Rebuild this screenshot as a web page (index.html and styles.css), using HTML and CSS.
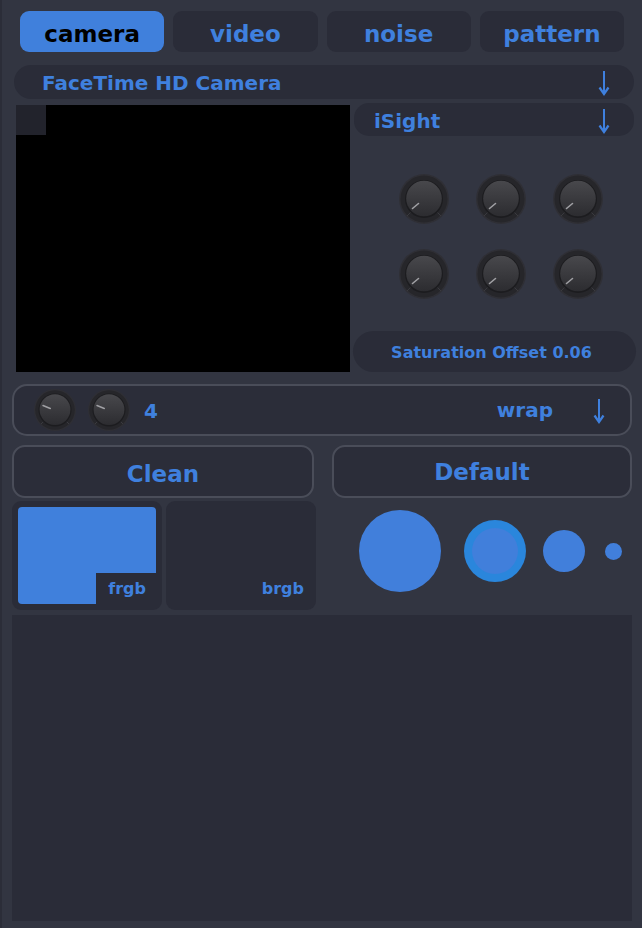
FILE: index.html
```html
<!DOCTYPE html>
<html>
<head>
<meta charset="utf-8">
<link rel="stylesheet" href="styles.css">
</head>
<body>
<svg class="defs" width="0" height="0">
  <defs>
    <linearGradient id="kg" x1="0" y1="0" x2="0" y2="1">
      <stop offset="0" stop-color="#48484c"/>
      <stop offset="1" stop-color="#2c2c30"/>
    </linearGradient>
    <symbol id="knob" viewBox="0 0 50 50">
      <circle cx="25" cy="25" r="25" fill="#2f2f35"/>
      <circle cx="25" cy="25" r="23.5" fill="#26262a"/>
      <line x1="12.3" y1="37.7" x2="8" y2="42" stroke="#3a3a3f" stroke-width="1"/>
      <line x1="37.7" y1="37.7" x2="42" y2="42" stroke="#3a3a3f" stroke-width="1"/>
      <circle cx="25" cy="25" r="19" fill="#1c1c1f"/>
      <circle cx="25" cy="24.5" r="17.8" fill="url(#kg)"/>
      <line x1="19.5" y1="29.5" x2="13.5" y2="34.5" stroke="#a0a0a4" stroke-width="1.6" stroke-linecap="round"/>
    </symbol>
    <symbol id="sknob" viewBox="0 0 42 42">
      <circle cx="21" cy="21" r="21" fill="#2f2f35"/>
      <circle cx="21" cy="21" r="19.8" fill="#26262a"/>
      <line x1="10.5" y1="31.5" x2="7" y2="35" stroke="#3a3a3f" stroke-width="1"/>
      <line x1="31.5" y1="31.5" x2="35" y2="35" stroke="#3a3a3f" stroke-width="1"/>
      <circle cx="21" cy="21" r="16.5" fill="#1c1c1f"/>
      <circle cx="21" cy="20.6" r="15.4" fill="url(#kg)"/>
      <line x1="16.3" y1="19.5" x2="9" y2="16.5" stroke="#a0a0a4" stroke-width="1.5" stroke-linecap="round"/>
    </symbol>
    <symbol id="arrow" viewBox="0 0 12 26">
      <line x1="6" y1="1" x2="6" y2="23" stroke="#3f80de" stroke-width="2"/>
      <path d="M1.5 17.5 L6 24 L10.5 17.5" fill="none" stroke="#3f80de" stroke-width="2.2"/>
    </symbol>
  </defs>
</svg>

<div class="app">
  <div class="tabs">
    <div class="tab active">camera</div>
    <div class="tab">video</div>
    <div class="tab">noise</div>
    <div class="tab">pattern</div>
  </div>

  <div class="dropdown main-drop">
    <span>FaceTime HD Camera</span>
    <svg class="arrow"><use href="#arrow"/></svg>
  </div>

  <div class="row3">
    <div class="camview"><div class="corner"></div></div>
    <div class="rightcol">
      <div class="dropdown isight">
        <span>iSight</span>
        <svg class="arrow"><use href="#arrow"/></svg>
      </div>
      <div class="knobs">
        <svg class="knob"><use href="#knob"/></svg>
        <svg class="knob"><use href="#knob"/></svg>
        <svg class="knob"><use href="#knob"/></svg>
        <svg class="knob"><use href="#knob"/></svg>
        <svg class="knob"><use href="#knob"/></svg>
        <svg class="knob"><use href="#knob"/></svg>
      </div>
      <div class="satbtn">Saturation Offset 0.06</div>
    </div>
  </div>

  <div class="knobrow">
    <svg class="sknob"><use href="#sknob"/></svg>
    <svg class="sknob second"><use href="#sknob"/></svg>
    <span class="num">4</span>
    <span class="wrap">wrap</span>
    <svg class="arrow wraparrow"><use href="#arrow"/></svg>
  </div>

  <div class="buttons">
    <div class="btn clean">Clean</div>
    <div class="btn default">Default</div>
  </div>

  <div class="row6">
    <div class="swatch">
      <div class="fill"></div>
      <span class="label frgb">frgb</span>
    </div>
    <div class="swatch">
      <span class="label brgb">brgb</span>
    </div>
    <div class="circles">
      <div class="circle c1"></div>
      <div class="circle c2"><div class="c2in"></div></div>
      <div class="circle c3"></div>
      <div class="circle c4"></div>
    </div>
  </div>

  <div class="bottom"></div>
</div>
</body>
</html>
```

FILE: styles.css
```css
html, body {
  margin: 0;
  padding: 0;
}
body {
  background: #323541;
  width: 642px;
  height: 928px;
  overflow: hidden;
  font-family: "DejaVu Sans", Verdana, sans-serif;
  font-weight: bold;
  color: #3f80de;
}
.defs {
  position: absolute;
  width: 0;
  height: 0;
}
.app {
  display: flex;
  flex-direction: column;
  height: 928px;
  box-sizing: border-box;
  border-left: 2px solid #2b2d38;
}
.tabs {
  display: grid;
  grid-template-columns: repeat(4, 1fr);
  column-gap: 9px;
  width: 604px;
  height: 41px;
  margin: 11px 0 0 18px;
}
.tab {
  background: #2a2c38;
  border-radius: 9px;
  display: flex;
  align-items: center;
  justify-content: center;
  font-size: 23px;
  color: #3f80de;
  padding-top: 4px;
  box-sizing: border-box;
}
.tab.active {
  background: #4080dc;
  color: #000;
}
.dropdown {
  display: flex;
  align-items: center;
  justify-content: space-between;
  background: #2a2c38;
  box-sizing: border-box;
  font-size: 20px;
}
.main-drop {
  margin: 13px 0 0 12px;
  width: 620px;
  height: 34px;
  border-radius: 17px;
  padding: 2px 24px 0 28px;
}
.arrow {
  width: 12px;
  height: 26px;
  display: block;
}
.row3 {
  display: flex;
  margin: 4px 0 0 14px;
  height: 269px;
}
.camview {
  width: 334px;
  height: 267px;
  margin-top: 2px;
  background: #000;
}
.corner {
  width: 30px;
  height: 30px;
  background: #22232c;
}
.rightcol {
  width: 283px;
  margin-left: 3px;
  display: flex;
  flex-direction: column;
}
.isight {
  margin-left: 1px;
  width: 280px;
  height: 33px;
  border-radius: 15px;
  padding: 2px 24px 0 20px;
}
.knobs {
  display: grid;
  grid-template-columns: repeat(3, 50px);
  column-gap: 27px;
  row-gap: 25px;
  margin: 38px 0 0 46px;
}
.knob {
  width: 50px;
  height: 50px;
  display: block;
}
.satbtn {
  margin-top: 32px;
  height: 41px;
  border-radius: 21px;
  background: #2a2c38;
  display: flex;
  align-items: center;
  justify-content: center;
  font-size: 16px;
  padding: 2px 6px 0 0;
  box-sizing: border-box;
}
.knobrow {
  margin: 12px 0 0 10px;
  width: 620px;
  height: 52px;
  box-sizing: border-box;
  border: 2px solid #4a4d59;
  border-radius: 15px;
  background: #2b2d39;
  display: flex;
  align-items: center;
  padding: 0 25px 0 20px;
}
.sknob {
  width: 42px;
  height: 42px;
  display: block;
}
.sknob.second {
  margin-left: 12px;
}
.num {
  font-size: 20px;
  margin-left: 14px;
  padding-top: 2px;
}
.wrap {
  font-size: 20px;
  margin-left: auto;
  margin-right: 40px;
}
.wraparrow {
  margin-top: 2px;
}
.buttons {
  display: flex;
  margin: 9px 0 0 10px;
  height: 53px;
}
.btn {
  box-sizing: border-box;
  border: 2px solid #4a4d59;
  border-radius: 13px;
  background: #2b2d39;
  display: flex;
  align-items: center;
  justify-content: center;
  font-size: 23px;
}
.clean {
  width: 302px;
  padding-top: 4px;
}
.default {
  width: 300px;
  margin-left: 18px;
}
.row6 {
  display: flex;
  margin: 3px 0 0 10px;
  height: 109px;
}
.swatch {
  position: relative;
  width: 150px;
  height: 109px;
  background: #2a2c38;
  border-radius: 9px;
  box-sizing: border-box;
  padding: 6px;
}
.swatch + .swatch {
  margin-left: 4px;
}
.fill {
  width: 138px;
  height: 97px;
  background: #4080dc;
  border-radius: 4px;
}
.label {
  position: absolute;
  font-size: 16px;
  line-height: 31px;
  bottom: 6px;
  right: 6px;
  background: #2a2c38;
  box-sizing: border-box;
  text-align: right;
  height: 31px;
}
.frgb {
  width: 60px;
  padding-right: 10px;
}
.brgb {
  right: 12px;
  background: transparent;
}
.circles {
  display: flex;
  align-items: center;
  padding-bottom: 9px;
  box-sizing: border-box;
}
.circle {
  border-radius: 50%;
  background: #417fdb;
  flex: none;
}
.c1 {
  width: 82px;
  height: 82px;
  margin-left: 43px;
}
.c2 {
  width: 62px;
  height: 62px;
  margin-left: 23px;
  background: #2a86dc;
  display: flex;
  align-items: center;
  justify-content: center;
}
.c2in {
  width: 46px;
  height: 46px;
  border-radius: 50%;
  background: #417fdb;
}
.c3 {
  width: 42px;
  height: 42px;
  margin-left: 17px;
}
.c4 {
  width: 17px;
  height: 17px;
  margin-left: 20px;
}
.bottom {
  margin: 5px 0 0 10px;
  width: 620px;
  height: 306px;
  background: #2a2c38;
}
```
